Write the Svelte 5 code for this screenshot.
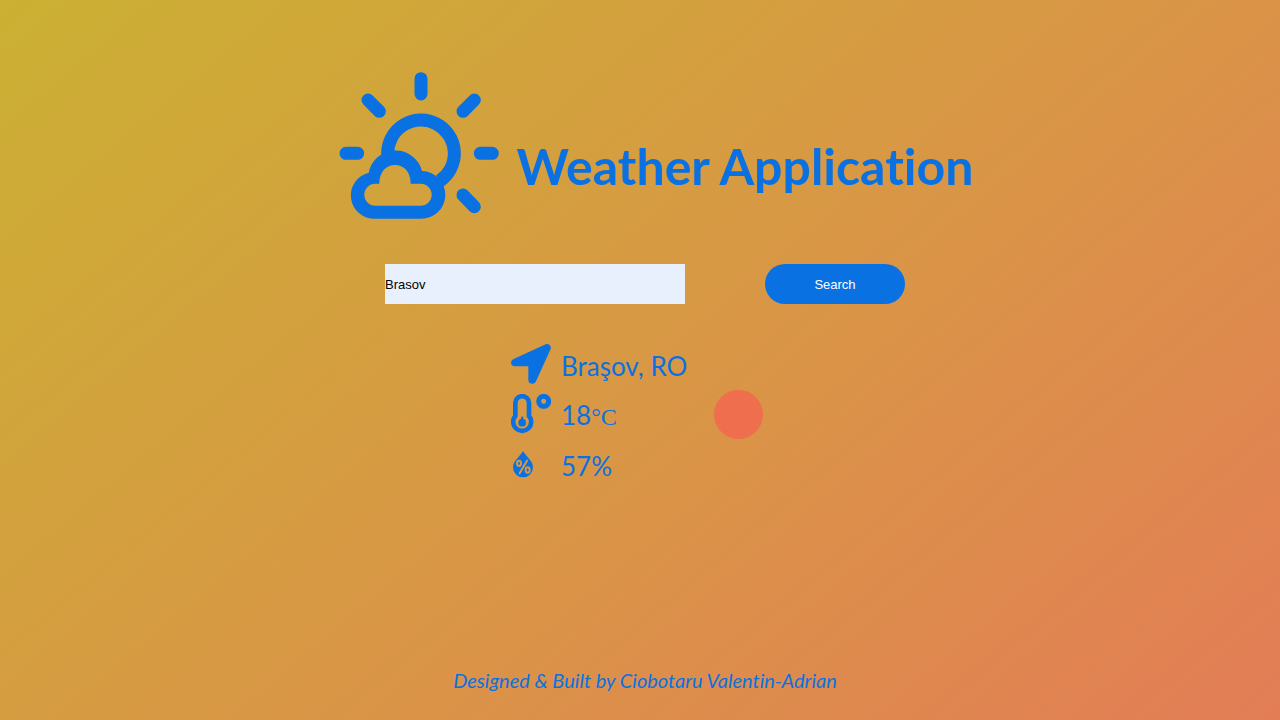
<script>
  let city = $state('Brasov');
  const submit = (event) => event.preventDefault();
</script>

<div class="page">
  <header>
    <svg class="logo" viewBox="27 33 480 447" aria-hidden="true">
      <g fill="none" stroke="currentColor" stroke-width="39" stroke-linecap="round">
        <path d="M273 56V102M114 120l34 34M433 120l-34 34M48 280H83M451 280H487M399 405l34 35" />
        <path d="M173 288V280A100 100 0 1 1 329 363" stroke-linecap="butt" />
      </g>
      <path
        fill="currentColor"
        fill-rule="evenodd"
        d="M135 476H273A71 71 0 0 0 276 333A82 82 0 0 0 116 338A70 70 0 0 0 135 476ZM136 437H272A33 33 0 0 0 272 371H242C242 335 221 315 195 315C169 315 148 335 148 371H136A33 33 0 0 0 136 437Z"
      />
    </svg>
    <h1>Weather Application</h1>
  </header>

  <form onsubmit={submit}>
    <input type="text" aria-label="City" bind:value={city} />
    <button type="submit">Search</button>
  </form>

  <main>
    <div class="details">
      <div class="row">
        <svg viewBox="0 0 120 120" aria-hidden="true">
          <path fill="currentColor" d="M104 1C113-2 122 6 119 15L75 112C70 124 52 121 52 108V67H12C-2 67-4 50 8 45Z" />
        </svg>
        <span>Braşov, RO</span>
      </div>
      <div class="row">
        <svg viewBox="33 177 120 120" aria-hidden="true">
          <g fill="none" stroke="currentColor">
            <path stroke-width="14" d="M46 204A20.500 20.500 0 0 1 87 204V243A27 27 0 1 1 46 243Z" />
            <circle cx="131" cy="199" r="15" stroke-width="15" />
            <path stroke-width="7" stroke-linecap="round" d="M66.500 248V260" />
          </g>
          <circle cx="66.500" cy="263" r="11.500" fill="currentColor" />
        </svg>
        <span>18<span class="unit">°C</span></span>
      </div>
      <div class="row">
        <svg viewBox="33 327 120 120" aria-hidden="true">
          <mask id="percent">
            <rect x="33" y="327" width="120" height="120" fill="white" />
            <g fill="none" stroke="black" stroke-width="6">
              <path d="M81 377L59 415" stroke-linecap="round" />
              <ellipse cx="57" cy="385" rx="6" ry="8" />
              <ellipse cx="83" cy="405" rx="6" ry="8" />
            </g>
          </mask>
          <path mask="url(#percent)" fill="currentColor" d="M69 349C80 366 99 379 99 397A30 30 0 0 1 39 397C39 379 58 366 69 349Z" />
        </svg>
        <span>57%</span>
      </div>
    </div>
    <div class="marker"></div>
  </main>

  <footer>Designed &amp; Built by Ciobotaru Valentin-Adrian</footer>
</div>

<style>
  :global(body) {
    margin: 0;
  }

  .page {
    box-sizing: border-box;
    min-height: 100vh;
    padding: 71px 0 28px 10px;
    display: flex;
    flex-direction: column;
    align-items: center;
    color: #0a71e2;
    background: linear-gradient(140deg, #cbb033, #da9447 58%, #e37d56);
    font-family: Lato, "Open Sans", sans-serif;
    font-variant-ligatures: none;
  }

  header {
    display: flex;
    align-items: center;
    gap: 18px;
    padding-left: 22px;
  }

  .logo {
    width: 160px;
    height: 149px;
    flex: none;
  }

  h1 {
    margin: 40px 0 0;
    font-size: 50px;
    line-height: 60px;
    font-weight: 700;
  }

  form {
    display: flex;
    gap: 80px;
    margin-top: 44px;
  }

  input,
  button {
    box-sizing: border-box;
    height: 40px;
    padding: 0;
    border: 0;
    font: 13px "Liberation Sans", Arial, sans-serif;
  }

  input {
    width: 300px;
    color: #000;
    background: #e8f0fe;
  }

  button {
    width: 140px;
    border-radius: 20px;
    color: #fff;
    background: #0a71e2;
  }

  main {
    display: flex;
    align-items: center;
    gap: 26px;
    margin-top: 40px;
    padding-right: 16px;
  }

  .details {
    display: grid;
    gap: 10px;
    min-width: 177px;
  }

  .row {
    display: flex;
    align-items: center;
    gap: 10px;
    height: 40px;
    font-size: 26px;
    line-height: 40px;
  }

  .row > span {
    padding-top: 4px;
  }

  .row svg {
    width: 40px;
    height: 40px;
  }

  .unit {
    font-family: "Liberation Serif", serif;
    font-size: 24px;
  }

  .marker {
    width: 49px;
    height: 49px;
    border-radius: 50%;
    background: #ee6e4e;
  }

  footer {
    margin-top: auto;
    font-size: 20px;
    line-height: 24px;
    font-style: italic;
  }
</style>
